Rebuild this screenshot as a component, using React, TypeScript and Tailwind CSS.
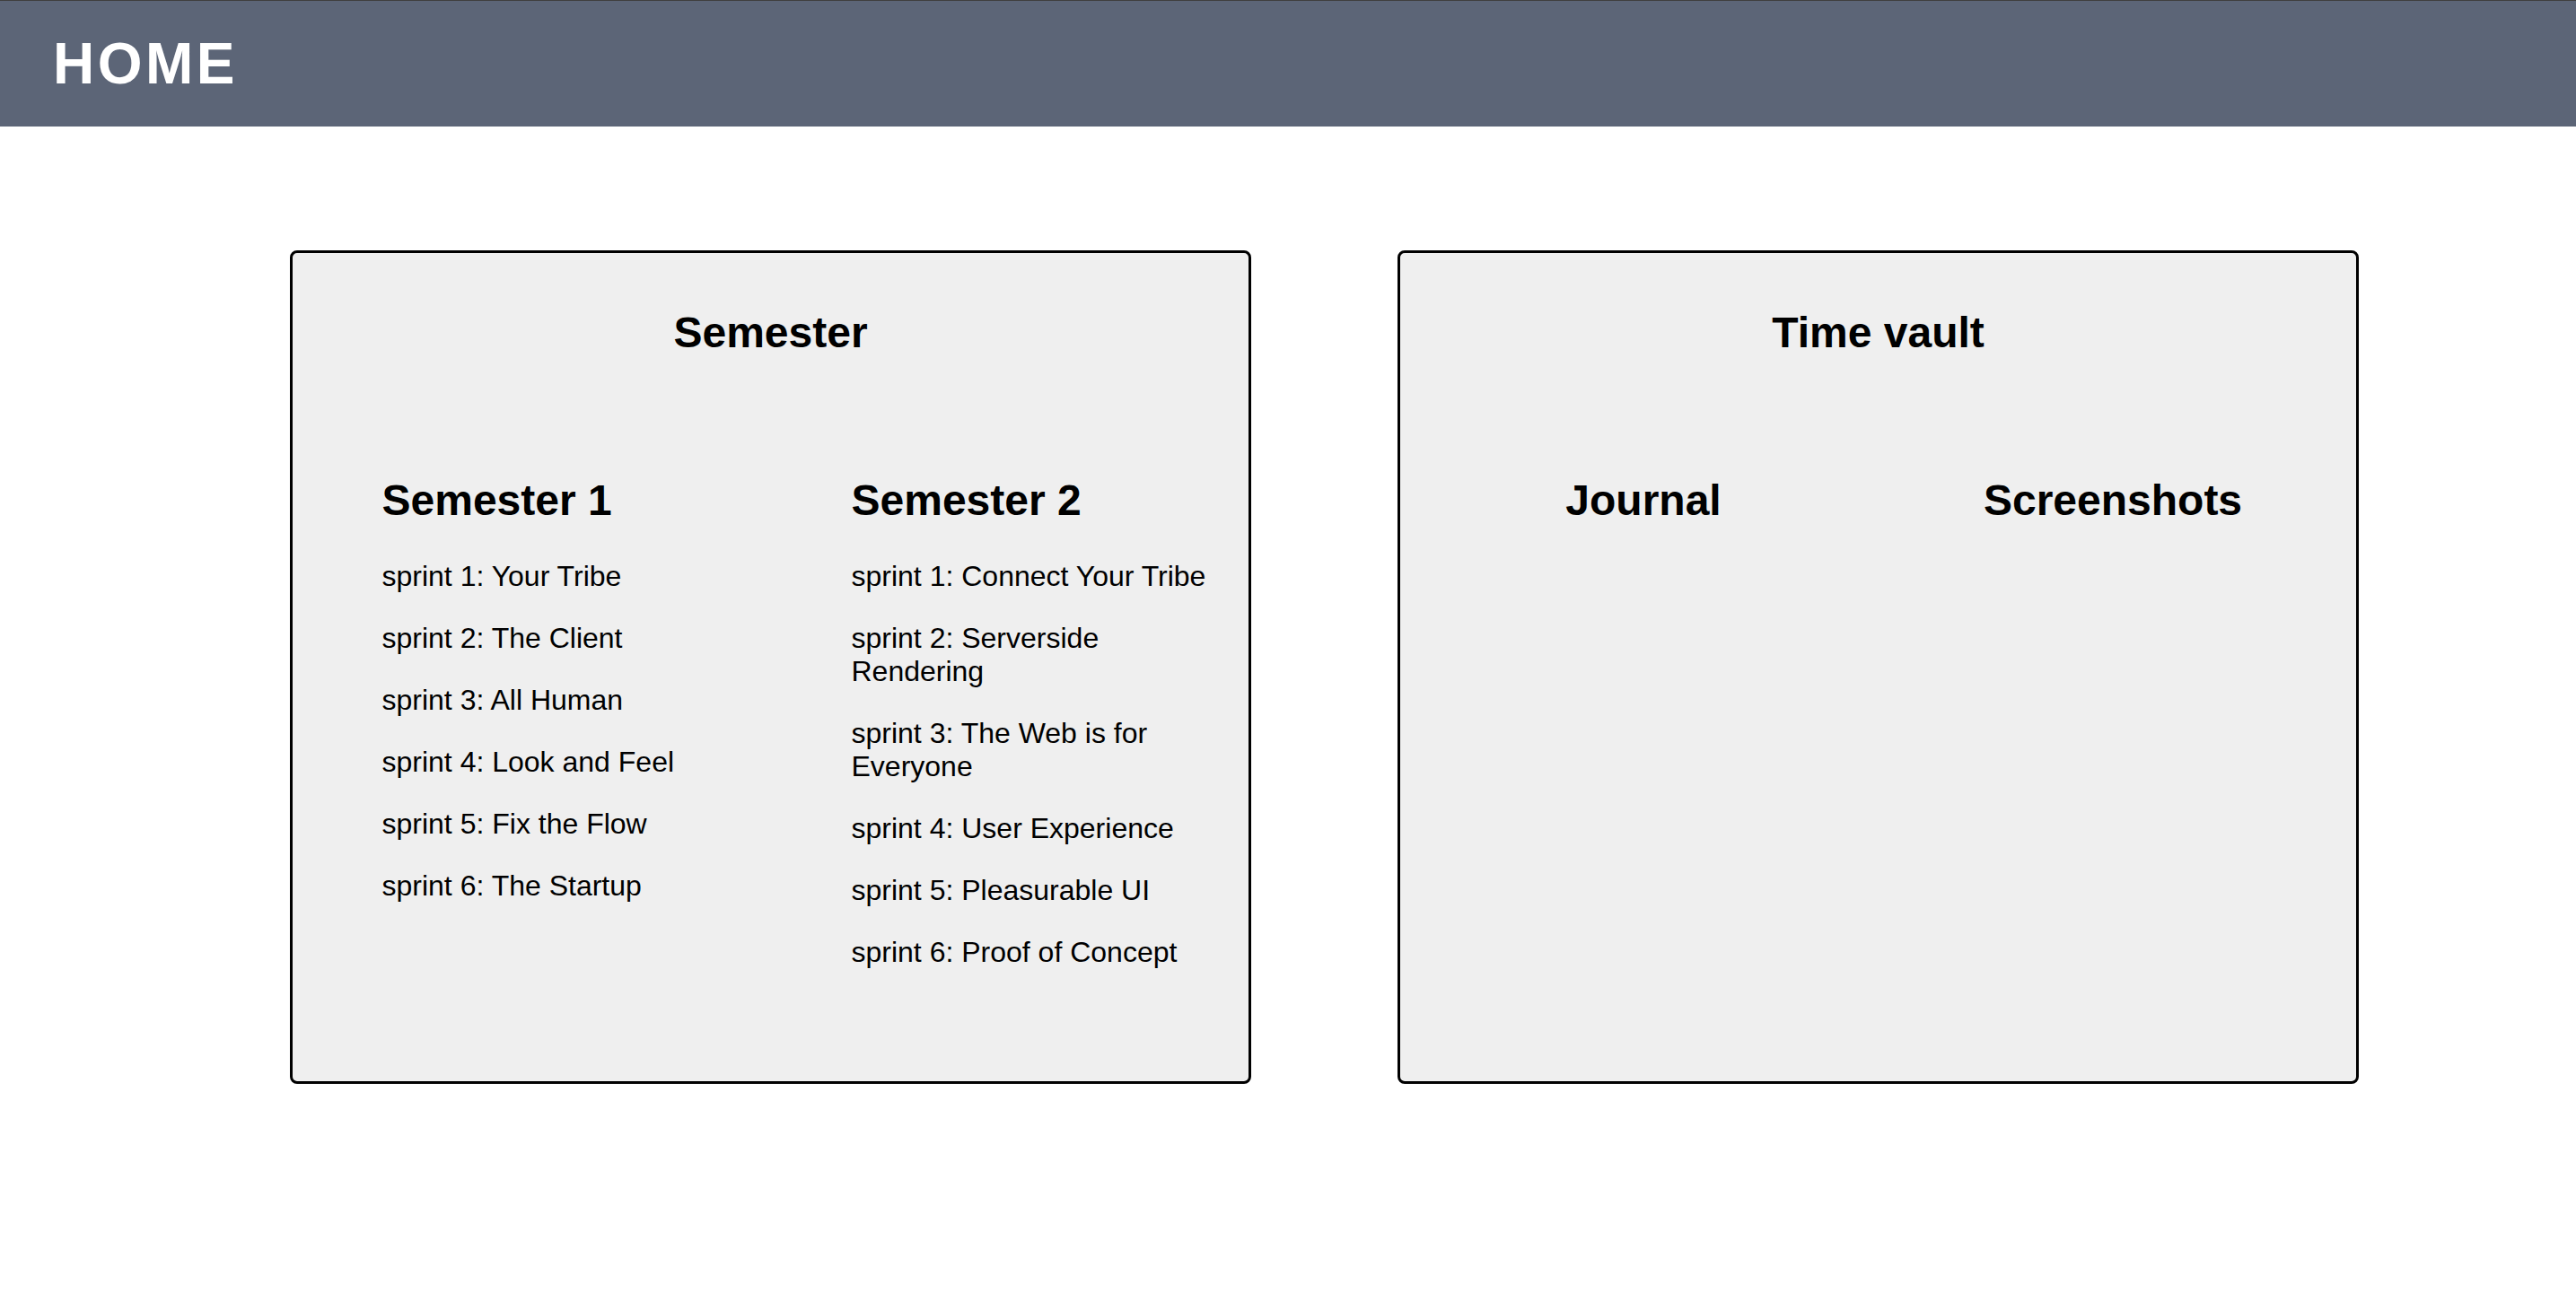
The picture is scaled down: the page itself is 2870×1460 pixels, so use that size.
import React from 'react';

const semester1 = [
  'sprint 1: Your Tribe',
  'sprint 2: The Client',
  'sprint 3: All Human',
  'sprint 4: Look and Feel',
  'sprint 5: Fix the Flow',
  'sprint 6: The Startup',
];

const semester2 = [
  'sprint 1: Connect Your Tribe',
  'sprint 2: Serverside Rendering',
  'sprint 3: The Web is for Everyone',
  'sprint 4: User Experience',
  'sprint 5: Pleasurable UI',
  'sprint 6: Proof of Concept',
];

function SprintColumn({ title, items }: { title: string; items: string[] }) {
  return (
    <div className="pl-[90px] pr-[20px]">
      <h3 className="text-[48px] leading-[54px] font-bold">{title}</h3>
      <ul className="mt-[39px] flex flex-col gap-[32px]">
        {items.map((item) => (
          <li key={item} className="text-[32px] leading-[37px]">
            {item}
          </li>
        ))}
      </ul>
    </div>
  );
}

function Card({ title, children }: { title: string; children: React.ReactNode }) {
  return (
    <section className="w-[1071px] h-[929px] bg-[#efefef] border-[3px] border-black rounded-[8px] px-[9.5px] pt-[62px]">
      <h2 className="text-center text-[48px] leading-[54px] font-bold">{title}</h2>
      <div className="mt-[133px] grid grid-cols-2">{children}</div>
    </section>
  );
}

export default function App() {
  return (
    <div className="min-h-screen bg-white text-black font-['Liberation_Sans',Arial,sans-serif]">
      {/* Header */}
      <header className="h-[141px] bg-[#5c6577] border-t border-[#3f3f3f] flex items-center pl-[59px]">
        <h1 className="text-white text-[64px] font-bold tracking-[3.5px]">HOME</h1>
      </header>

      {/* Cards */}
      <main className="flex gap-[163px] pl-[323px] pt-[138px]">
        <Card title="Semester">
          <SprintColumn title="Semester 1" items={semester1} />
          <SprintColumn title="Semester 2" items={semester2} />
        </Card>

        <Card title="Time vault">
          <h3 className="text-center text-[48px] leading-[54px] font-bold">Journal</h3>
          <h3 className="text-center text-[48px] leading-[54px] font-bold">Screenshots</h3>
        </Card>
      </main>
    </div>
  );
}
